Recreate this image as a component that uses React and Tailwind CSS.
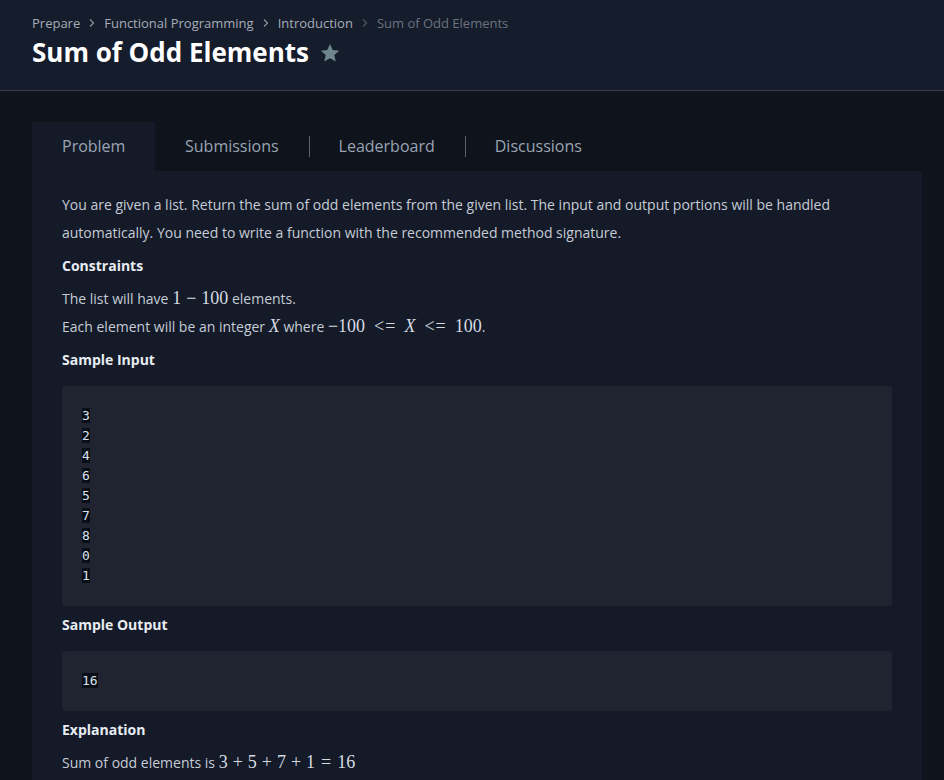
import React from 'react';

const sans = { fontFamily: '"Open Sans", "Noto Sans", sans-serif' };

function Math({ children }) {
  // KaTeX-like inline math
  return <span className="font-['Liberation_Serif',serif] text-[18px] leading-none text-[#d5dae2]">{children}</span>;
}

// binary operator (+, −) and relation (=, <=) spacing
const Bin = ({ c }) => <span className="mx-[5px]">{c}</span>;
const Rel = ({ c }) => <span className="mx-[6px]">{c}</span>;
const Leq = () => <span className="ml-[9px] mr-[8px] tracking-[1px]">&lt;=</span>;

function Chevron({ dim }) {
  return (
    <svg width="14" height="14" viewBox="0 0 14 14" className="mx-[5px]" fill="none">
      <path d="M5 3.5 L8.5 7 L5 10.5" stroke={dim ? '#535a66' : '#8c94a1'} strokeWidth="1.2" />
    </svg>
  );
}

function Code({ lines }) {
  return (
    <div className="mt-3 rounded-[3px] bg-[#1f2430] px-5 py-5">
      <pre className="font-['DejaVu_Sans_Mono',monospace] text-[13px] leading-[20px] text-[#dbe3ee]">
        {lines.map((l, i) => (
          <div key={i}>
            <span className="bg-[#0a0e16]">{l}</span>
          </div>
        ))}
      </pre>
    </div>
  );
}

export default function App() {
  const tabs = ['Submissions', 'Leaderboard', 'Discussions'];

  return (
    <div style={sans} className="min-h-[780px] w-full bg-[#0e131c]">
      {/* header */}
      <div className="h-[91px] border-b border-[#3b4049] bg-[#151c2b] px-8 pt-[13px]">
        <div className="flex items-center text-[13px] leading-[20px]">
          <span className="text-[#a6adb8]">Prepare</span>
          <Chevron />
          <span className="text-[#a6adb8]">Functional Programming</span>
          <Chevron />
          <span className="text-[#a6adb8]">Introduction</span>
          <Chevron dim />
          <span className="text-[#6b7380]">Sum of Odd Elements</span>
        </div>
        <div className="mt-[1px] flex items-center">
          <h1 className="text-[26px] font-bold leading-[36px] text-white">Sum of Odd Elements</h1>
          <svg width="22" height="22" viewBox="0 0 24 24" className="ml-[10px] mt-[2px]">
            <path
              d="M12 2.2l2.95 6.6 7.15.7-5.4 4.8 1.6 7.05L12 17.65 5.7 21.35l1.6-7.05-5.4-4.8 7.15-.7z"
              fill="#6f858d"
            />
          </svg>
        </div>
      </div>

      {/* tabs + panel */}
      <div className="mr-[22px] ml-8 mt-[31px]">
        <div className="flex h-[49px] items-center text-[16px] text-[#9aa4b3]">
          <div className="flex h-full w-[123px] items-center bg-[#141a28] pb-[2px] pl-[30px]">Problem</div>
          <div className="flex items-center">
            {tabs.map((t, i) => (
              <React.Fragment key={t}>
                {i > 0 && <div className="h-[21px] w-px bg-[#5b626d]" />}
                <span className={i === 0 ? 'mb-[2px] px-[30px]' : 'mb-[2px] pl-[29px] pr-[30px]'}>{t}</span>
              </React.Fragment>
            ))}
          </div>
        </div>

        <div className="bg-[#141a28] pb-4 pl-[30px] pr-[30px] pt-5 text-[14px] leading-[28px] text-[#c6ccd6]">
          <p>
            You are given a list. Return the sum of odd elements from the given list. The input and output portions will be
            handled automatically. You need to write a function with the recommended method signature.
          </p>

          <h3 className="mt-[5px] font-bold text-[#e8ecf2]">Constraints</h3>
          <p className="mt-[5px]">
            The list will have{' '}
            <Math>
              1<Bin c="−" />100
            </Math>{' '}
            elements.
          </p>
          <p>
            Each element will be an integer{' '}
            <Math>
              <i>X</i>
            </Math>{' '}
            where{' '}
            <Math>
              −100
              <Leq />
              <i>X</i>
              <Leq />
              100
            </Math>
            .
          </p>

          <h3 className="mt-[5px] font-bold text-[#e8ecf2]">Sample Input</h3>
          <Code lines={['3', '2', '4', '6', '5', '7', '8', '0', '1']} />

          <h3 className="mt-[5px] font-bold text-[#e8ecf2]">Sample Output</h3>
          <Code lines={['16']} />

          <h3 className="mt-[5px] font-bold text-[#e8ecf2]">Explanation</h3>
          <p className="mt-[5px]">
            Sum of odd elements is{' '}
            <Math>
              3<Bin c="+" />5<Bin c="+" />7<Bin c="+" />1<Rel c="=" />16
            </Math>
          </p>
        </div>
      </div>
    </div>
  );
}
